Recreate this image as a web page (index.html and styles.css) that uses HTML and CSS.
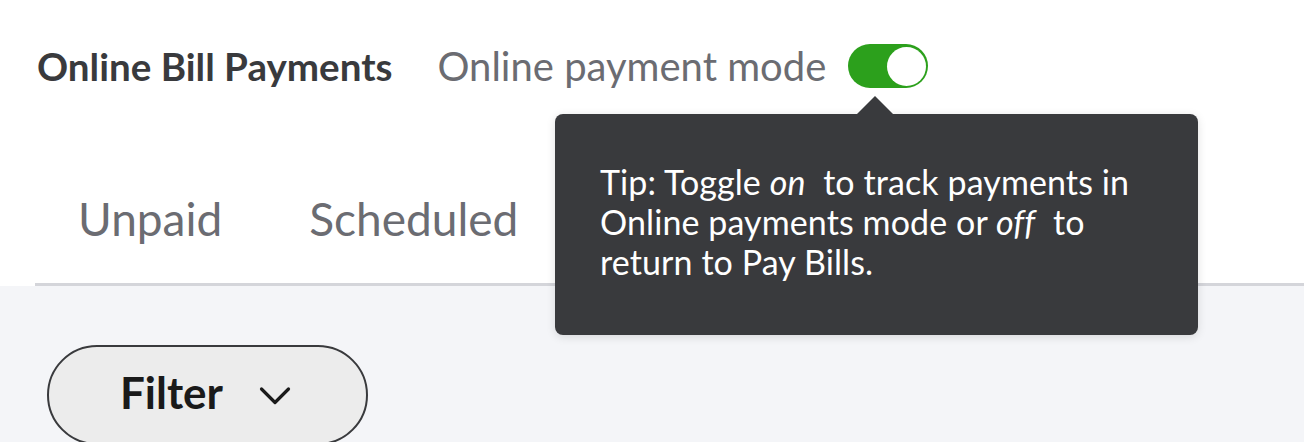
FILE: index.html
```html
<!DOCTYPE html>
<html>
<head>
<meta charset="utf-8">
<link rel="stylesheet" href="styles.css">
</head>
<body>
<div class="page">
  <div class="top">
    <header class="header">
      <h1 class="title">Online Bill Payments</h1>
      <span class="mode-label">Online payment mode</span>
      <span class="toggle" role="switch" aria-checked="true"><span class="knob"></span></span>
    </header>
    <nav class="tabs">
      <span class="tab">Unpaid</span>
      <span class="tab">Scheduled</span>
    </nav>
  </div>
  <div class="content">
    <button class="filter">Filter
      <svg class="chev" width="32" height="20" viewBox="0 0 32 20"><path d="M2.5 3 L16 16.5 L29.5 3" fill="none" stroke="#1a1a1a" stroke-width="3.2" stroke-linecap="round" stroke-linejoin="round"/></svg>
    </button>
  </div>
  <div class="tooltip">Tip: Toggle <em>on</em>&nbsp; to track payments in<br>Online payments mode or <em>off</em>&nbsp; to<br>return to Pay Bills.</div>
</div>
</body>
</html>
```

FILE: styles.css
```css
html, body {
  margin: 0;
  padding: 0;
  overflow: hidden;
  background: #f4f5f8;
}
body {
  font-family: "Lato", "Noto Sans", sans-serif;
}
.page {
  position: relative;
  width: 1304px;
  height: 442px;
  overflow: hidden;
}
.top {
  background: #ffffff;
}
.header {
  height: 132px;
  display: flex;
  align-items: center;
  padding-left: 37px;
}
.title {
  margin: 0;
  font-size: 38.6px;
  font-weight: 700;
  color: #393a3d;
}
.mode-label {
  margin-left: 45px;
  font-size: 40px;
  font-weight: 400;
  color: #6b6c72;
}
.toggle {
  margin-left: 22px;
  width: 80px;
  height: 44px;
  border-radius: 22px;
  background: #2ca01c;
  display: flex;
  align-items: center;
  justify-content: flex-end;
  padding: 0 2px;
  box-sizing: border-box;
}
.knob {
  width: 39px;
  height: 39px;
  border-radius: 50%;
  background: #ffffff;
}
.tabs {
  margin-left: 35px;
  border-bottom: 3px solid #d4d5da;
  display: flex;
  align-items: center;
  gap: 87px;
  padding-left: 43px;
  padding-top: 22px;
  box-sizing: border-box;
  height: 154px;
}
.tab {
  font-size: 46px;
  color: #6b6c72;
}
.content {
  padding: 59px 0 0 47px;
}
.filter {
  width: 321px;
  height: 100px;
  border: 2.5px solid #393a3d;
  border-radius: 50px;
  background: #ececec;
  font-family: "Lato", "Noto Sans", sans-serif;
  font-size: 44px;
  font-weight: 700;
  color: #1a1a1a;
  display: flex;
  align-items: center;
  justify-content: center;
  gap: 36px;
  padding: 0 4px 6px 0;
  box-sizing: border-box;
}
.chev {
  margin-top: 8px;
}
.tooltip {
  position: absolute;
  left: 555px;
  top: 114px;
  width: 643px;
  height: 221px;
  box-sizing: border-box;
  padding: 48px 30px 0 45px;
  background: #393a3d;
  border-radius: 8px;
  box-shadow: 0 2px 10px rgba(0, 0, 0, 0.12);
  color: #ffffff;
  font-size: 34px;
  line-height: 40px;
  letter-spacing: 0.1px;
  white-space: nowrap;
}
.tooltip em {
  font-style: italic;
}
.tooltip::before {
  content: "";
  position: absolute;
  top: -18px;
  left: 302px;
  border-left: 18px solid transparent;
  border-right: 18px solid transparent;
  border-bottom: 18px solid #393a3d;
}
```
